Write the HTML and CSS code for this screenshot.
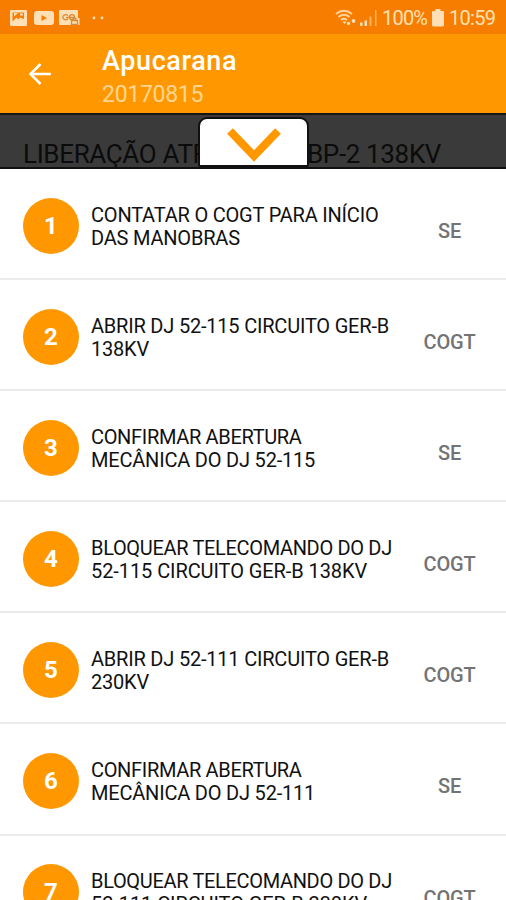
FILE: index.html
```html
<!DOCTYPE html>
<html lang="pt-BR">
<head>
<meta charset="utf-8">
<title>Apucarana</title>
<link rel="stylesheet" href="styles.css">
</head>
<body>
<div class="screen">
  <div class="status">
    <svg class="notices" viewBox="0 0 100 18" width="100" height="18">
      <path fill-rule="evenodd" d="M2 1h15q1 0 1 1v14q0 1-1 1H2q-1 0-1-1V2q0-1 1-1zM3.500 3.500v9l4-4 2 2 1.500-2 4 1.500V3.500z"/>
      <path d="M5 4h4L5 7.500zM11 4.500h3v2h-3z" />
      <path fill-rule="evenodd" d="M28 2h14q3 0 3 3v8q0 3-3 3H28q-3 0-3-3V5q0-3 3-3zM32.500 6v6l5.500-3z"/>
      <path fill-rule="evenodd" d="M51 1h17q1 0 1 1v7h1.500v7H51q-1 0-1-1V2q0-1 1-1z"/>
      <g class="cut"><path d="M59 6.500a3 2.500 0 1 0 0 3.500M57 8.500h8"/><circle cx="63" cy="8.200" r="2.500"/><path d="M62.500 11.500h6v4h-6zM64 11.500v-1.500q1.500-2 3 0v1.500"/></g>
      <circle cx="85" cy="9" r="1.400"/><circle cx="93" cy="9" r="1.400"/>
    </svg>
    <div class="system">
      <svg class="signal" viewBox="0 0 44 18" width="44" height="18">
        <g class="waves"><path d="M1 5q8-6.500 16 0M3.500 8q5.500-4.500 11 0M6 11q3-2.500 6 0"/></g>
        <path d="M7.500 12.500h4l-2 2.500z"/><circle cx="13.500" cy="14.500" r="1.700"/><circle cx="18.500" cy="12" r="1.900"/>
        <path d="M25 13.500h2.500V17H25zM29.500 11.500H32V17h-2.500z"/><path class="dim" d="M34.500 7.500h2V17h-2zM40 1h1.500v16H40z"/>
      </svg>
      <span class="percent">100%</span>
      <svg class="battery" viewBox="0 0 12 18" width="12" height="18"><path d="M3.500 0h5v2H11q1 0 1 1v13q0 1.500-1.500 1.500h-9Q0 17.500 0 16V3q0-1 1-1h2.500z"/></svg>
      <span class="clock">10:59</span>
    </div>
  </div>
  <header class="bar">
    <svg class="back" viewBox="0 0 24 24" width="24" height="24"><path d="M22.800 12H3M12.500 2L2.500 12l10 10"/></svg>
    <div class="titles"><h1><span>Apucarana</span></h1><p><span>20170815</span></p></div>
  </header>
  <div class="banner">
    <div class="operation"><span class="lead">LIBERAÇÃO ATR</span><span>BP-2 138KV</span></div>
    <div class="tab"><svg viewBox="0 0 54 34" width="54" height="34"><path d="M3 3l24 25L51 3"/></svg></div>
  </div>
  <ol class="steps">
    <li><b class="num">1</b><p class="text"><span>CONTATAR O COGT PARA INÍCIO</span><br><span>DAS MANOBRAS</span></p><span class="who">SE</span></li>
    <li><b class="num">2</b><p class="text"><span>ABRIR DJ 52-115 CIRCUITO GER-B</span><br><span>138KV</span></p><span class="who">COGT</span></li>
    <li><b class="num">3</b><p class="text"><span class="tight">CONFIRMAR ABERTURA</span><br><span>MECÂNICA DO DJ 52-115</span></p><span class="who">SE</span></li>
    <li><b class="num">4</b><p class="text"><span class="tight">BLOQUEAR TELECOMANDO DO DJ</span><br><span class="wide">52-115 CIRCUITO GER-B 138KV</span></p><span class="who">COGT</span></li>
    <li><b class="num">5</b><p class="text"><span>ABRIR DJ 52-111 CIRCUITO GER-B</span><br><span>230KV</span></p><span class="who">COGT</span></li>
    <li><b class="num">6</b><p class="text"><span class="tight">CONFIRMAR ABERTURA</span><br><span>MECÂNICA DO DJ 52-111</span></p><span class="who">SE</span></li>
    <li><b class="num">7</b><p class="text"><span class="tight">BLOQUEAR TELECOMANDO DO DJ</span><br><span class="wide">52-111 CIRCUITO GER-B 230KV</span></p><span class="who">COGT</span></li>
  </ol>
</div>
</body>
</html>
```
FILE: styles.css
```css
* { box-sizing: border-box; margin: 0; padding: 0; }
body { font-family: Roboto, "Liberation Sans", sans-serif; background: #fff; }
.screen { width: 506px; height: 900px; overflow: hidden; display: flex; flex-direction: column; }

.status { height: 34px; flex: none; background: #f77d00; display: flex; justify-content: space-between; align-items: center; padding: 1px 10px 0 9px; color: #ffe0b2; }
.status svg { fill: #ffdfb5; flex: none; }
.cut { fill: none; stroke: #d98a35; stroke-width: 1.3; }
.system { display: flex; align-items: center; font-size: 20px; line-height: 24px; }
.waves { fill: none; stroke: #ffd39b; stroke-width: 1.8; }
.dim { opacity: .55; }
.percent { width: 46px; margin-left: 3px; letter-spacing: -.8px; white-space: nowrap; }
.battery { margin: 0 5px 0 4px; }
.clock { width: 47px; letter-spacing: -.7px; white-space: nowrap; }

.bar { height: 79px; flex: none; background: #ff9800; display: flex; padding-left: 28px; }
.back { margin-top: 28px; fill: none; stroke: #fff; stroke-width: 2.500; }
.titles { margin-left: 50px; padding-top: 10px; }
h1 { font-size: 27px; line-height: 34px; font-weight: 500; letter-spacing: .6px; color: #fff; }
.titles p { font-size: 23px; line-height: 34px; letter-spacing: -.3px; color: #ffd58f; }

.banner { height: 56px; flex: none; background: #3a3a3a; border-top: 2px solid #161616; border-bottom: 2px solid #111; position: relative; padding: 22px 0 0 23px; overflow: hidden; }
.operation { display: flex; font-size: 26px; line-height: 34px; letter-spacing: -.35px; color: #0b0b0b; white-space: nowrap; }
.lead { width: 284px; }
.tab { position: absolute; left: 198px; top: 2px; width: 111px; height: 50px; background: #fff; border: 2px solid #111; border-radius: 9px 9px 2px 2px; display: flex; justify-content: center; padding-top: 9px; }
.tab svg { fill: none; stroke: #ff9800; stroke-width: 8; }

.steps { list-style: none; flex: none; }
.steps li { height: 111.1px; border-bottom: 2px solid #ebebeb; display: flex; padding-left: 23px; }
.num { width: 56px; height: 56px; flex: none; margin-top: 28.500px; border-radius: 50%; background: #ff9800; color: #fff; font-size: 24px; line-height: 57px; text-align: center; }
.text { width: 320px; margin: 34.600px 0 0 12px; font-size: 20px; line-height: 23.300px; letter-spacing: -.2px; color: #111; white-space: nowrap; }
.tight { letter-spacing: -.33px; }
.wide { letter-spacing: -.08px; }
.who { width: 77px; text-align: center; margin-top: 50px; font-size: 20px; line-height: 24px; font-weight: 500; letter-spacing: -.2px; color: #737373; }
```
